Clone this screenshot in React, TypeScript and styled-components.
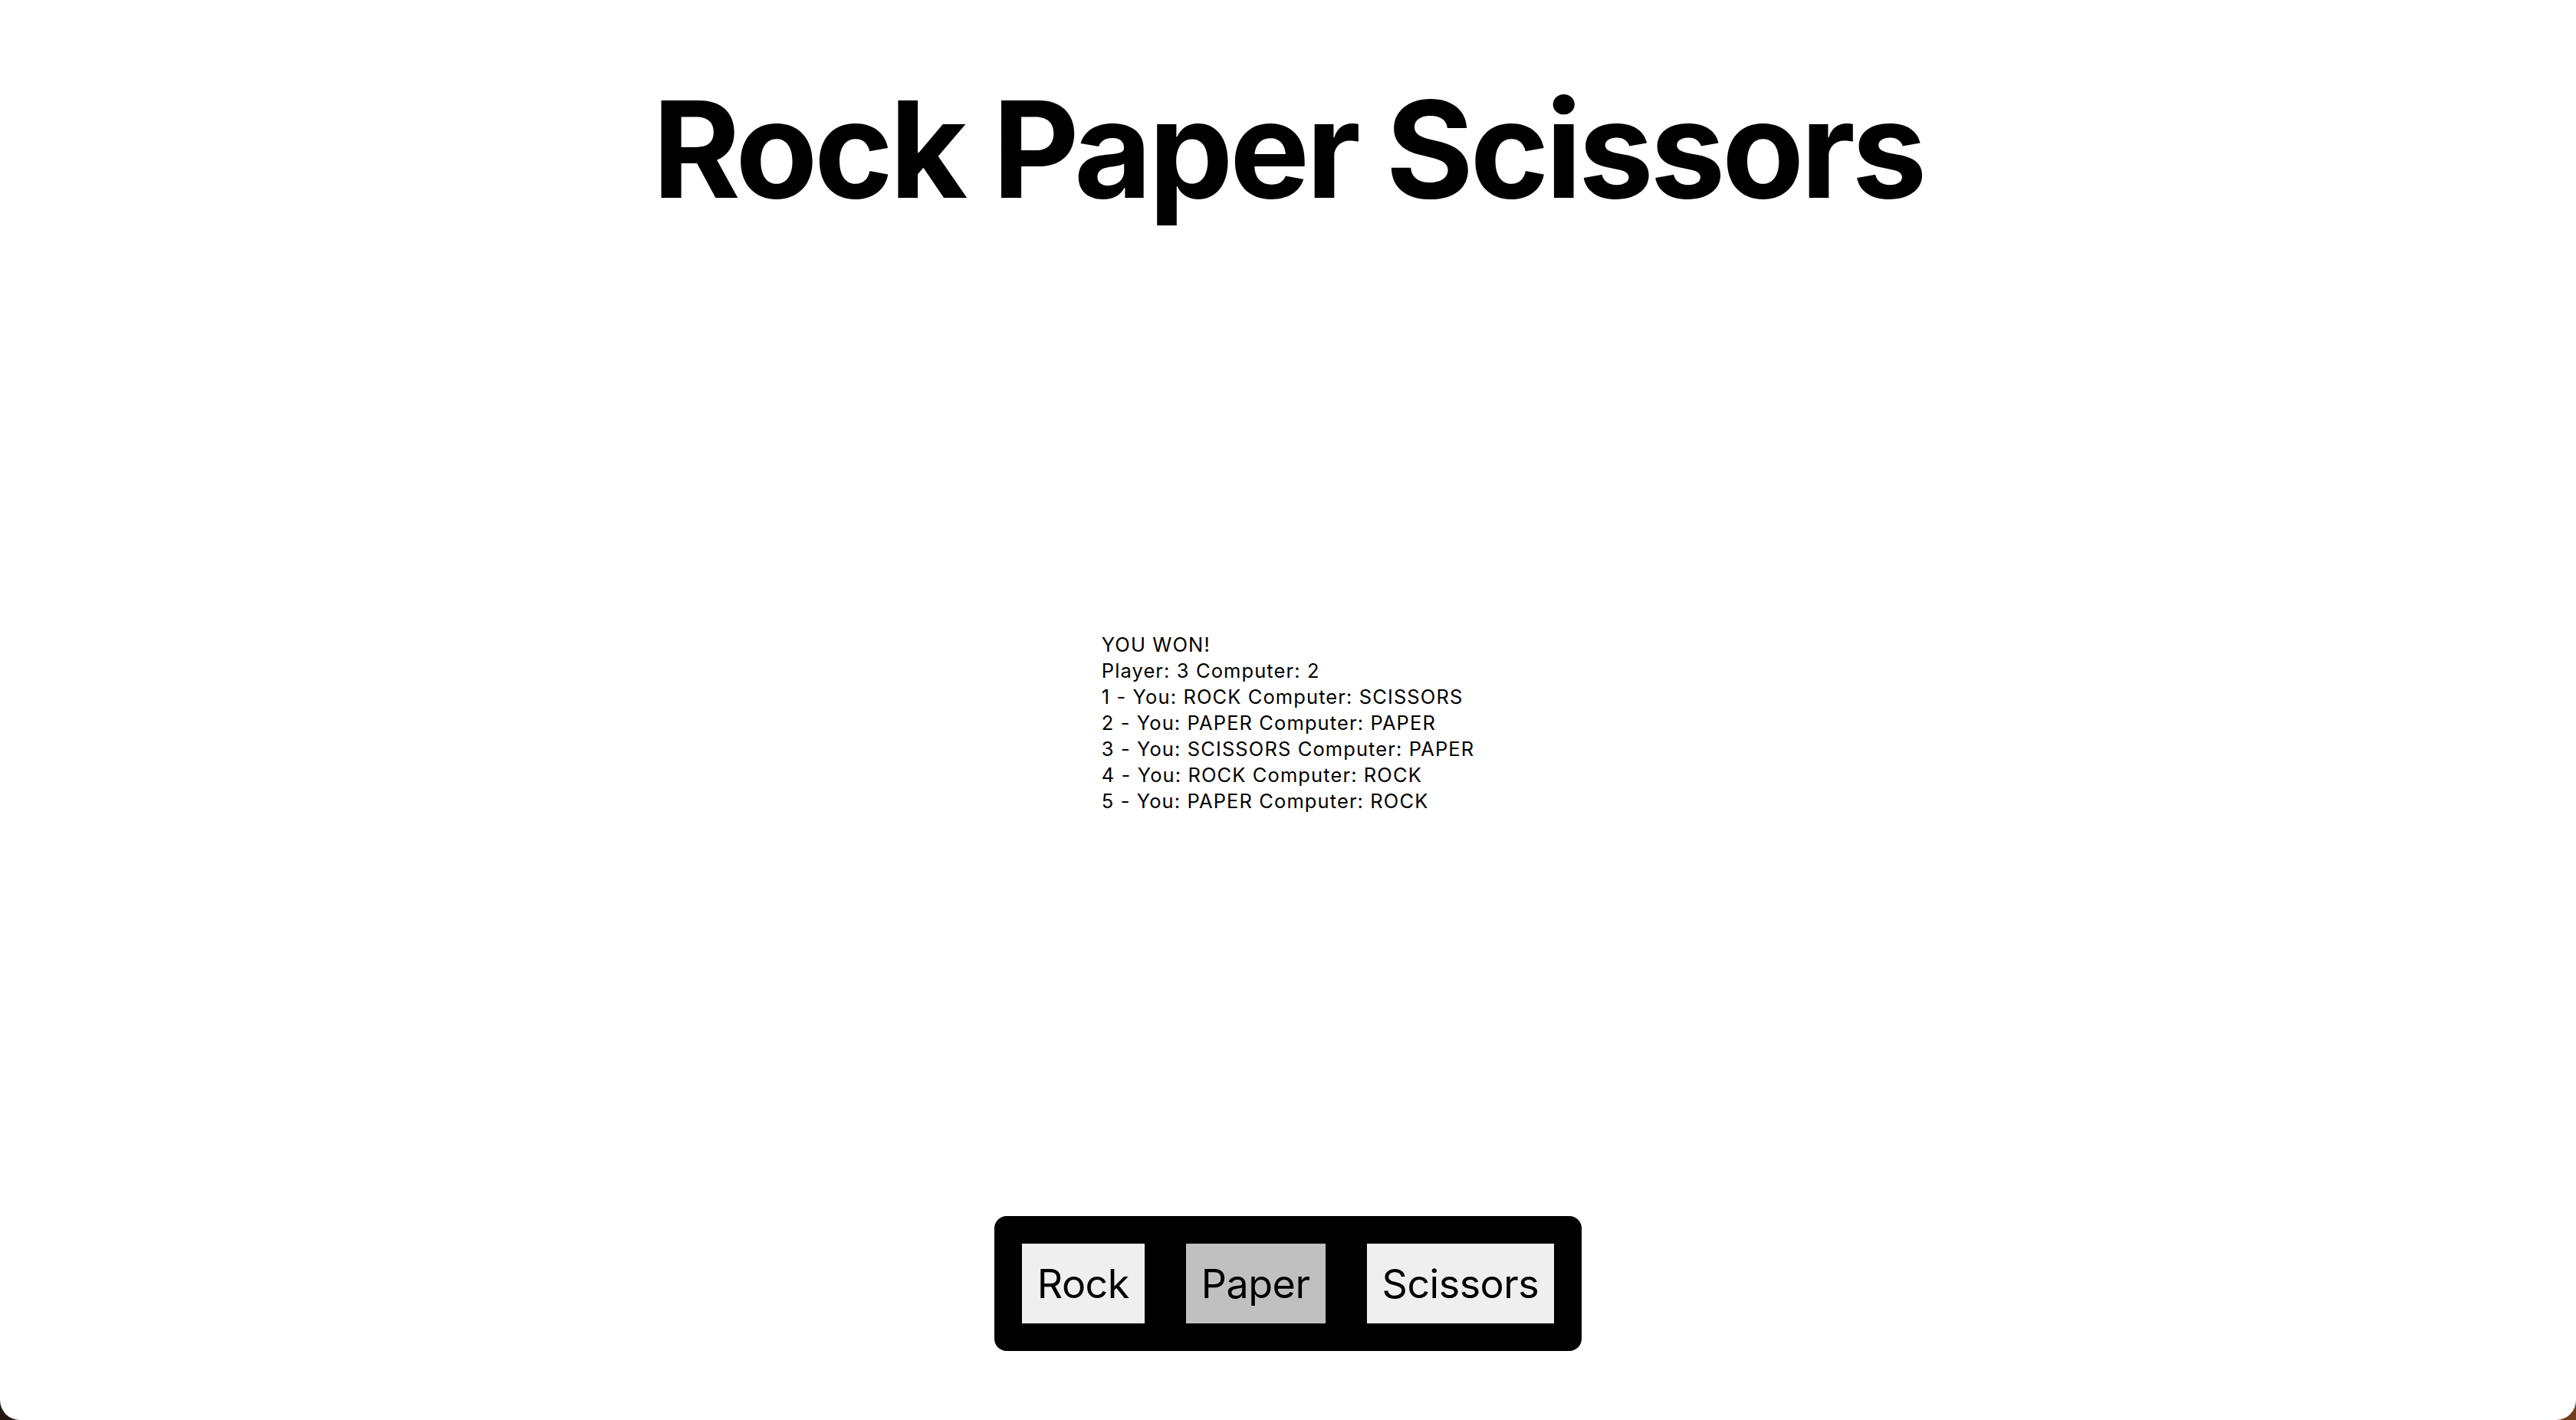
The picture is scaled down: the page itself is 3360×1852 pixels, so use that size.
import React from "react";
import styled, { createGlobalStyle } from "styled-components";

const GlobalStyle = createGlobalStyle`
  html, body {
    margin: 0;
    padding: 0;
    height: 100%;
  }
  body {
    background: linear-gradient(90deg, #24160f 0%, #4a2c18 50%, #6e3e1e 100%);
    font-family: Inter, "Noto Sans", sans-serif;
    color: #000;
  }
  #root {
    min-height: 100%;
  }
`;

const Page = styled.main`
  height: 1852px;
  box-sizing: border-box;
  background: #ffffff;
  border-bottom-left-radius: 26px;
  border-bottom-right-radius: 26px;
  display: flex;
  flex-direction: column;
  align-items: center;
  overflow: hidden;
`;

const Title = styled.h1`
  margin: 107px 0 0;
  font-family: Inter, "Noto Sans", sans-serif;
  font-weight: 700;
  font-size: 175px;
  line-height: 175px;
  letter-spacing: -4.5px;
  white-space: nowrap;
`;

const Results = styled.section`
  margin-top: 542px;
  width: fit-content;
  font-size: 25.5px;
  line-height: 34px;
  letter-spacing: 1.1px;
  font-weight: 400;
`;

const Line = styled.div`
  white-space: nowrap;
`;

const Controls = styled.nav`
  margin-top: auto;
  margin-bottom: 90px;
  display: flex;
  gap: 54px;
  padding: 36px;
  background: #000;
  border-radius: 16px;
`;

const ChoiceButton = styled.button<{ $active?: boolean }>`
  height: 104px;
  padding: 0 20px;
  border: none;
  border-radius: 0;
  background: ${(p) => (p.$active ? "#c0c0c0" : "#efefef")};
  color: #000;
  font-family: Inter, "Noto Sans", sans-serif;
  font-size: 52px;
  font-weight: 400;
  letter-spacing: -0.5px;
  cursor: pointer;
`;

const rounds = [
  ["ROCK", "SCISSORS"],
  ["PAPER", "PAPER"],
  ["SCISSORS", "PAPER"],
  ["ROCK", "ROCK"],
  ["PAPER", "ROCK"],
];

export default function App() {
  return (
    <>
      <GlobalStyle />
      <Page>
        <Title>Rock Paper Scissors</Title>
        <Results>
          <Line>YOU WON!</Line>
          <Line>Player: 3 Computer: 2</Line>
          {rounds.map(([you, cpu], i) => (
            <Line key={i}>
              {i + 1} - You: {you} Computer: {cpu}
            </Line>
          ))}
        </Results>
        <Controls>
          <ChoiceButton>Rock</ChoiceButton>
          <ChoiceButton $active>Paper</ChoiceButton>
          <ChoiceButton>Scissors</ChoiceButton>
        </Controls>
      </Page>
    </>
  );
}
